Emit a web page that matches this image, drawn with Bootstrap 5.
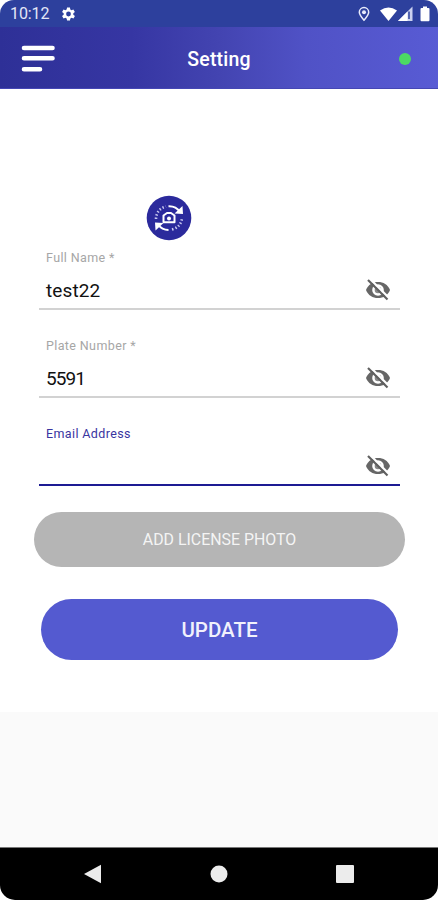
<!DOCTYPE html>
<html lang="en">
<head>
<meta charset="utf-8">
<meta name="viewport" content="width=device-width, initial-scale=1">
<title>Setting</title>
<link href="https://cdn.jsdelivr.net/npm/bootstrap@5.3.0/dist/css/bootstrap.min.css" rel="stylesheet">
<style>
body{font-family:Roboto,"Liberation Sans",sans-serif;background:#fff;overflow:hidden}
svg{display:block;flex:none}
.phone{width:438px;height:900px;border-radius:14px 14px 15px 15px}
.status-row{height:27px;background:#2d409d;padding:0 8px 0 10px}
.clock{font-size:16px;line-height:28px;letter-spacing:-.1px;color:#e3e7f7;width:51px;padding-top:1px}
.app-head{height:62px;background:linear-gradient(90deg,#2e3097 0%,#3636a3 30%,#4344b1 50%,#5052c6 70%,#585bd4 100%);border-bottom:1px solid #4547b4;padding:2px 27px 0 21px}
.app-title{font-size:19.5px;font-weight:500;letter-spacing:.2px;line-height:24px;padding:2px 0 0 6px}
.online{width:12px;height:12px;background:#4cd964}
.content{height:623px;padding:106px 0 0}
.avatar-btn{width:46px;height:46px;margin-left:146px}
.field{width:361px;height:88px;margin-left:39px}
.field-label{height:19px;line-height:19px;padding-left:7px;font-size:12.5px;letter-spacing:.38px;color:#a6a6a6}
.field-box{height:43px;padding:6px 9px 0 7px;border-bottom:2.5px solid #d2d2d2}
.field-value{font-size:19px;line-height:24px;letter-spacing:.1px;color:#111;padding-top:2px}
.value-digits{letter-spacing:-.9px}
.field.active .field-label{color:#39359f}
.field.active .field-box{border-bottom:2px solid #1d1b93}
.license{width:371px;height:55px;margin-left:34px;background:#b5b5b5;color:#f4f4f4;font-size:15.9px}
.update{width:357px;height:61px;margin:32px 0 0 41px;background:#545ad0;color:#f1f1fc;font-size:20.5px;font-weight:500}
.license,.license:hover,.update,.update:hover{border:0}
.btn-text{padding-top:2px}
.update .btn-text{padding-top:3px}
.rest{height:135px;background:#fafafa}
.sysnav{height:53px;background:#000;border-top:1px solid #777;padding:0 84px 0 83px}
</style>
</head>
<body>
<svg width="0" height="0" class="position-absolute"><defs>
<symbol id="eye-off" viewBox="0 0 26 24">
<path d="M1 12C3.200 6.500 7.600 4 13 4S22.800 6.500 25 12c-2.200 5.500-6.600 8-12 8S3.200 17.500 1 12z" fill="#666"/>
<circle cx="13" cy="12" r="5.800" fill="#fff"/><circle cx="13" cy="12" r="3.300" fill="#888"/>
<path d="M5 1L24 20" stroke="#fff" stroke-width="2.400"/><path d="M3 2l19.500 19.500" stroke="#5f5f5f" stroke-width="2.200"/>
</symbol></defs></svg>
<main class="phone d-flex flex-column overflow-hidden">
<div class="status-row d-flex align-items-center">
<span class="clock">10:12</span>
<svg width="15" height="16" viewBox="3 1.500 20 21"><path fill="#fff" fill-rule="evenodd" d="M19.400 13a7.500 7.500 0 0 0 0-2l2.100-1.600-2-3.500-2.500 1a7.300 7.300 0 0 0-1.700-1L15 3.300h-4l-.400 2.600a7.300 7.300 0 0 0-1.700 1l-2.500-1-2 3.500L6.600 11a7.500 7.500 0 0 0 0 2l-2.200 1.600 2 3.500 2.500-1c.5.400 1.100.7 1.700 1l.4 2.600h4l.4-2.600c.6-.3 1.200-.6 1.700-1l2.500 1 2-3.500zM13 8.800a3.200 3.200 0 1 1 0 6.400 3.200 3.200 0 0 1 0-6.400z"/></svg>
<svg class="ms-auto" width="12" height="16" viewBox="0 0 12 16"><path d="M6 14.200C3.500 11.400 1.300 8.800 1.300 6.300a4.700 4.700 0 0 1 9.400 0c0 2.500-2.200 5.100-4.700 7.900z" fill="none" stroke="#e8ebfb" stroke-width="1.500"/><circle cx="6" cy="6.300" r="2" fill="#e8ebfb"/></svg>
<svg style="margin-left:9px" width="19" height="16" viewBox="0 0 19 16"><path d="M1 4.500Q9.500-1.500 18 4.500L9.500 15z" fill="#fff"/></svg>
<svg width="15" height="16" viewBox="0 0 15 16"><path d="M0 15L14.500.5V15z" fill="#cbd1ef"/><path d="M0 15L9.500 5.500V15z" fill="#fff"/><path d="M11 5.500V13" stroke="#2d409d" stroke-width="1.500"/></svg>
<svg style="margin-left:7px" width="10" height="16" viewBox="0 0 10 16"><path d="M3 .5h4V2h1.500q1 0 1 1v11q0 1.200-1 1.200h-7q-1 0-1-1.200V3q0-1 1-1H3z" fill="#fff"/></svg>
</div>
<header class="app-head d-flex align-items-center justify-content-between text-white">
<svg width="34" height="28" viewBox="0 0 34 28"><path d="M3 3h28.500M3 13.200h28.500M3 24.300h16" stroke="#fff" stroke-width="4.600" stroke-linecap="round"/></svg>
<h1 class="app-title m-0">Setting</h1>
<div class="d-flex justify-content-end" style="width:34px"><span class="online rounded-circle"></span></div>
</header>
<section class="content bg-white">
<button class="avatar-btn btn p-0 border-0 d-block" aria-label="Change photo"><svg width="46" height="46" viewBox="0 0 46 46"><circle cx="23" cy="23" r="22.300" fill="#2b2a9c"/>
<g fill="none" stroke="#fff" stroke-width="2"><path d="M22.500 11.300Q30 11 34 17"/><path d="M22.500 35Q16 35 12 29.500"/><path d="M10 24Q10.500 14 20 11.500M26 34.500Q35 32 36 23" stroke="#c8c8ef" stroke-width="2.600" stroke-dasharray="1.400 2"/><path d="M17.500 20.500L21 18h4l3.500 2.500v6.700h-11z" stroke-linejoin="round"/></g><circle cx="23" cy="23.500" r="2" fill="#fff"/><path d="M28.500 18.500l8.500.5-.5-8zM17.500 28L9 27.500l.5 8z" fill="#fff"/></svg></button>
<div style="padding-top:6.500px">
<div class="field"><div class="field-label">Full Name *</div><div class="field-box d-flex align-items-center justify-content-between"><span class="field-value">test22</span><svg width="26" height="24"><use href="#eye-off"/></svg></div></div>
<div class="field"><div class="field-label">Plate Number *</div><div class="field-box d-flex align-items-center justify-content-between"><span class="field-value value-digits">5591</span><svg width="26" height="24"><use href="#eye-off"/></svg></div></div>
<div class="field active"><div class="field-label">Email Address</div><div class="field-box d-flex align-items-center justify-content-between"><span class="field-value"></span><svg width="26" height="24"><use href="#eye-off"/></svg></div></div>
</div>
<button class="license btn rounded-pill d-block p-0"><span class="d-block btn-text">ADD LICENSE PHOTO</span></button>
<button class="update btn rounded-pill d-block p-0"><span class="d-block btn-text">UPDATE</span></button>
</section>
<div class="rest"></div>
<nav class="sysnav d-flex align-items-center justify-content-between">
<svg width="18" height="20" viewBox="0 0 18 20"><path d="M1 10L18 .7v18.600z" fill="#ececec"/></svg>
<svg width="18" height="18" viewBox="0 0 18 18"><circle cx="9" cy="9" r="8.500" fill="#ececec"/></svg>
<svg width="18" height="18" viewBox="0 0 18 18"><rect width="18" height="18" rx="1" fill="#ececec"/></svg>
</nav>
</main>
<script src="https://cdn.jsdelivr.net/npm/bootstrap@5.3.0/dist/js/bootstrap.bundle.min.js"></script>
</body>
</html>
